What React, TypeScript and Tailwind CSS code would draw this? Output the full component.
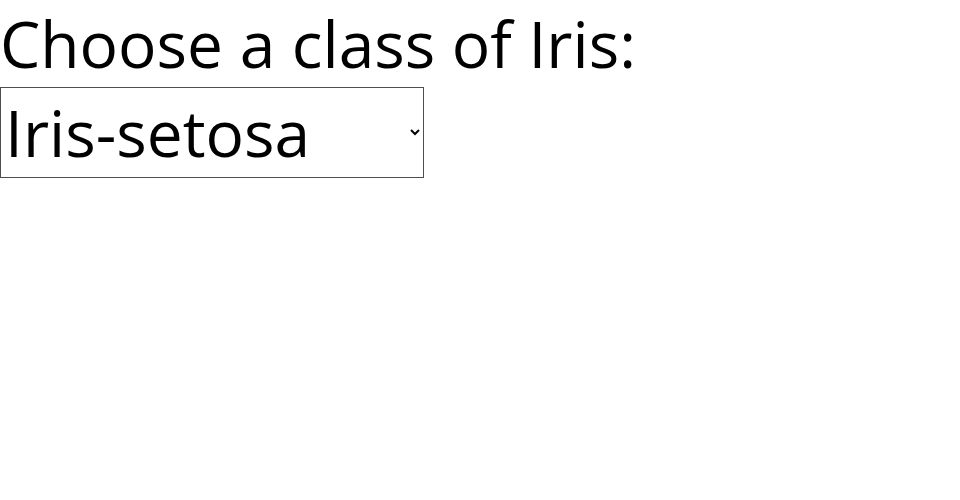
import React from "react";

export default function App() {
  return (
    <div className="bg-white text-black font-['Open_Sans',sans-serif]">
      <div className="text-[64px] leading-[87px]">Choose a class of Iris:</div>
      <select
        className="appearance-auto block w-[424px] h-[91px] border border-[#4f4f4f] bg-white text-[64px] text-black p-0 font-['Open_Sans',sans-serif]"
        defaultValue="Iris-setosa"
      >
        <option>Iris-setosa</option>
        <option>Iris-versicolor</option>
        <option>Iris-virginica</option>
      </select>
    </div>
  );
}
